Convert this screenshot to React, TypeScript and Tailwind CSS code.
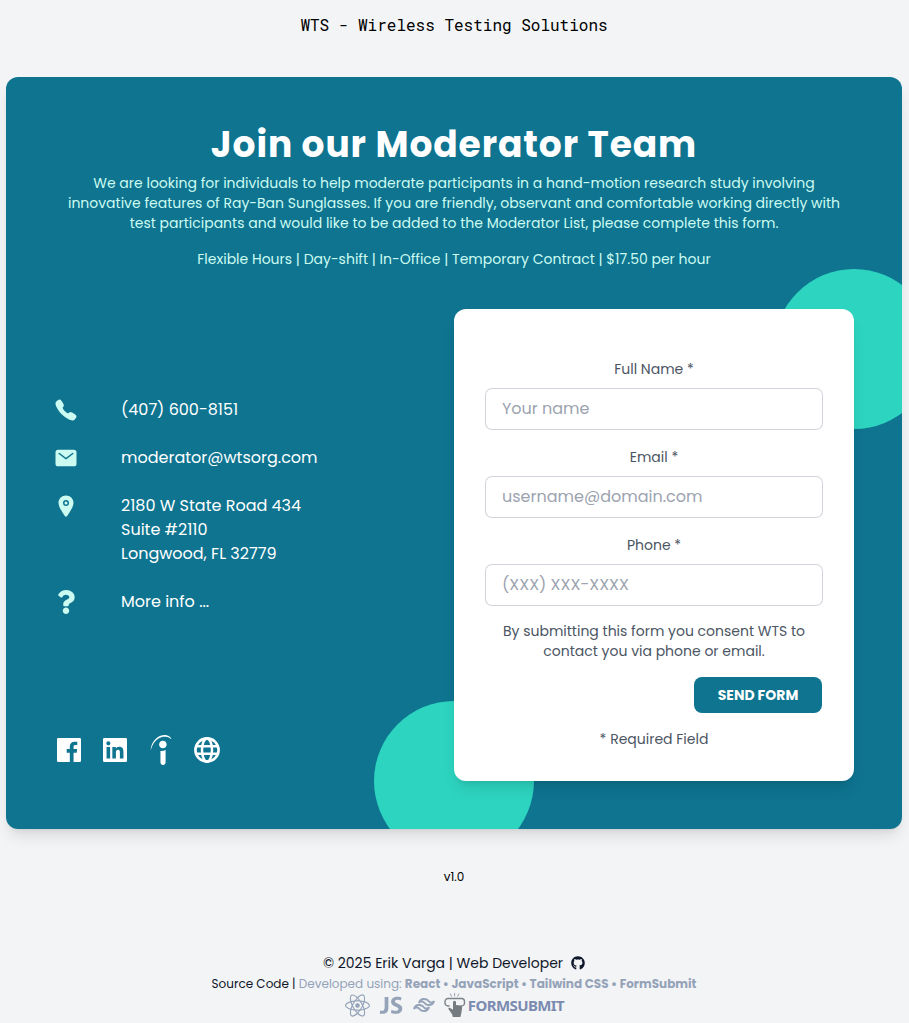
import type { ReactNode } from "react";
import { IoCall, IoMail, IoLocation } from "react-icons/io5";
import { BiLogoFacebookSquare, BiLogoLinkedinSquare } from "react-icons/bi";
import { FaQuestion, FaGithub } from "react-icons/fa";
import { SiReact, SiIndeed } from "react-icons/si";
import { DiJavascript1 } from "react-icons/di";
import { RiTailwindCssLine } from "react-icons/ri";

function ContactRow({ icon, children }: { icon: ReactNode; children: ReactNode }) {
  return (
    <li className="flex items-start gap-[43px]">
      <span className="w-6 shrink-0 text-2xl text-[#ccfbf1]">{icon}</span>
      <div className="flex flex-col whitespace-nowrap text-base text-white">{children}</div>
    </li>
  );
}

function Field({ label, placeholder }: { label: string; placeholder: string }) {
  return (
    <label className="flex flex-col gap-2.5">
      <span className="text-center text-sm text-[#4b5563]">{label}</span>
      <input
        placeholder={placeholder}
        className="h-10 w-full rounded-md bg-white px-4 pb-0.5 text-base outline-none ring-1 ring-[#d1d5db] placeholder:text-[#9ca3af]"
      />
    </label>
  );
}

function Globe() {
  return (
    <svg width="32" height="32" viewBox="0 0 32 32" fill="none" stroke="currentColor">
      <circle cx="16" cy="16" r="11.600" strokeWidth="2.600" />
      <ellipse cx="16" cy="16" rx="5" ry="11.600" strokeWidth="2.500" />
      <path d="M5 12.200h22M5 19.800h22" strokeWidth="2.500" />
    </svg>
  );
}

function FormSubmitMark() {
  return (
    <svg width="22" height="26" viewBox="0 0 22 26" fill="none">
      <path d="M10.6 1v3.4M6.2 1.6l1.4 3M15 1.6l-1.4 3" stroke="#9ca3af" strokeWidth="1" />
      <path d="M5.6 14H4a3 3 0 0 1-3-3V9.500a3 3 0 0 1 3-3h13.500a3 3 0 0 1 3 3V11a3 3 0 0 1-3 3h-1" stroke="#7d8489" strokeWidth="1.400" />
      <path d="M9 10.200a1.500 1.500 0 0 1 3 0v2.800l4.200.6c1.400.2 2 1 1.900 2.400l-.8 5.200-.9 3.800H8.800l-.6-2.400-3.600-5.400c-.6-1.200.5-1.900 1.500-1.300l2.900 1.800z" fill="#757b7f" />
    </svg>
  );
}

export default function App() {
  return (
    <div className="flex h-[1023px] flex-col items-center overflow-hidden bg-[#f3f4f6] font-['Poppins','Inter',sans-serif] text-black">
      <header className="mr-px pt-[13px] font-['Roboto_Mono','DejaVu_Sans_Mono',monospace] text-base/6">
        <span className="whitespace-pre">WTS - Wireless Testing Solutions</span>
      </header>

      <main className="relative mt-10 mr-px flex h-[752px] w-[896px] shrink-0 flex-col rounded-xl bg-[#0e7490] shadow-lg">
        <div className="absolute inset-0 overflow-hidden rounded-xl">
          <div className="absolute top-48 -right-8 size-40 rounded-full bg-[#2dd4bf]" />
          <div className="absolute -bottom-8 left-[368px] size-40 rounded-full bg-[#2dd4bf]" />
        </div>

        <section className="relative flex flex-col items-center whitespace-nowrap pt-12 text-sm text-[#ccfbf1]">
          <h1 className="text-4xl font-bold tracking-wide text-white">Join our Moderator Team</h1>
          <p className="mt-2 flex flex-col items-center">
            <span>We are looking for individuals to help moderate participants in a hand-motion research study involving</span>
            <span>innovative features of Ray-Ban Sunglasses. If you are friendly, observant and comfortable working directly with</span>
            <span>test participants and would like to be added to the Moderator List, please complete this form.</span>
          </p>
          <p className="mt-4">Flexible Hours | Day-shift | In-Office | Temporary Contract | $17.50 per hour</p>
        </section>

        <div className="relative mt-10 flex justify-between px-12">
          <div className="flex flex-col pt-[89px]">
            <ul className="flex flex-col gap-6">
              <ContactRow icon={<IoCall />}>(407) 600-8151</ContactRow>
              <ContactRow icon={<IoMail />}>moderator@wtsorg.com</ContactRow>
              <ContactRow icon={<IoLocation />}>
                <span>2180 W State Road 434</span>
                <span>Suite #2110</span>
                <span>Longwood, FL 32779</span>
              </ContactRow>
              <ContactRow icon={<FaQuestion />}>More info ...</ContactRow>
            </ul>
            <nav className="mt-[120px] -ml-px flex gap-3.5 text-[32px] text-white">
              <BiLogoFacebookSquare />
              <BiLogoLinkedinSquare />
              <SiIndeed className="m-px size-[30px]" />
              <Globe />
            </nav>
          </div>

          <form className="flex h-[472px] w-[400px] flex-col rounded-xl bg-white px-8 pt-[50px] shadow-lg">
            <div className="flex flex-col gap-[18px]">
              <Field label="Full Name *" placeholder="Your name" />
              <Field label="Email *" placeholder="username@domain.com" />
              <Field label="Phone *" placeholder="(XXX) XXX-XXXX" />
            </div>
            <p className="mt-4 flex flex-col items-center whitespace-nowrap text-sm text-[#4b5563]">
              <span>By submitting this form you consent WTS to</span>
              <span>contact you via phone or email.</span>
            </p>
            <button type="button" className="mt-4 h-9 w-32 self-end rounded-lg bg-[#0e7490] text-sm font-bold text-white">SEND FORM</button>
            <p className="mt-4 text-center text-sm text-[#4b5563]">* Required Field</p>
          </form>
        </div>
      </main>

      <p className="mt-10 mr-px text-xs">v1.0</p>

      <footer className="mt-[68px] mr-px flex flex-col items-center whitespace-nowrap text-[#0f172a]">
        <div className="flex items-center gap-2 text-sm">
          <span>© 2025 Erik Varga | Web Developer</span>
          <FaGithub className="size-3.5" />
        </div>
        <p className="mt-[3px] text-xs">
          Source Code | <span className="text-[#94a3b8]">Developed using: <b className="font-bold">React • JavaScript • Tailwind CSS • FormSubmit</b></span>
        </p>
        <div className="-mt-px ml-px flex h-7 items-center text-[#94a3b8]">
          <SiReact className="size-[25px]" />
          <DiJavascript1 className="ml-[5px] size-8" />
          <RiTailwindCssLine className="ml-[5px] size-6" />
          <div className="ml-2 flex items-center gap-0.5">
            <FormSubmitMark />
            <span className="font-['Noto_Sans'] text-[15px]/6 font-bold tracking-[-0.6px] text-[#7b8bb0]">FORMSUBMIT</span>
          </div>
        </div>
      </footer>
    </div>
  );
}
